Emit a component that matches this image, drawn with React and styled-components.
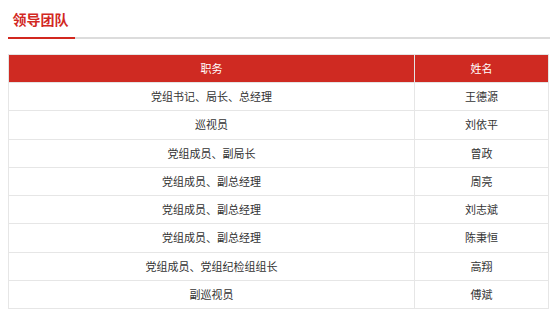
import React from "react";
import styled, { createGlobalStyle } from "styled-components";

const Global = createGlobalStyle`
  html, body { margin: 0; padding: 0; background: #fff; }
  body { font-family: "Noto Sans CJK SC", "Noto Sans", sans-serif; }
`;

const Page = styled.div`
  padding-left: 8px;
  width: 542px;
`;

const TabBar = styled.div`
  display: flex;
  border-bottom: 2px solid #dcdcdc;
`;

const Tab = styled.div`
  padding: 8px 6.5px 6px 4.5px;
  line-height: 23px;
  font-size: 14px;
  font-weight: 700;
  color: #d2281f;
  border-bottom: 2px solid #d2281f;
  margin-bottom: -2px;
`;

const Table = styled.table`
  margin-top: 15px;
  width: 541px;
  border-collapse: collapse;
  table-layout: fixed;
  font-size: 11px;
  color: #333;
`;

const Th = styled.th`
  background: #cf2a22;
  color: #fff;
  font-weight: 400;
  height: 27px;
  padding: 0;
  line-height: 27px;
  border: 1px solid #e4e4e4;
  text-align: center;
  width: ${(p) => p.$w || "auto"};
`;

const Td = styled.td`
  padding: 4px 0;
  line-height: 19.25px;
  border: 1px solid #e6e6e6;
  text-align: center;
`;

const rows = [
  ["党组书记、局长、总经理", "王德源"],
  ["巡视员", "刘依平"],
  ["党组成员、副局长", "曾政"],
  ["党组成员、副总经理", "周亮"],
  ["党组成员、副总经理", "刘志斌"],
  ["党组成员、副总经理", "陈秉恒"],
  ["党组成员、党组纪检组组长", "高翔"],
  ["副巡视员", "傅斌"],
];

export default function App() {
  return (
    <Page>
      <Global />
      <TabBar>
        <Tab>领导团队</Tab>
      </TabBar>
      <Table>
        <thead>
          <tr>
            <Th $w="405px">职务</Th>
            <Th>姓名</Th>
          </tr>
        </thead>
        <tbody>
          {rows.map(([role, name]) => (
            <tr key={name}>
              <Td>{role}</Td>
              <Td>{name}</Td>
            </tr>
          ))}
        </tbody>
      </Table>
    </Page>
  );
}
